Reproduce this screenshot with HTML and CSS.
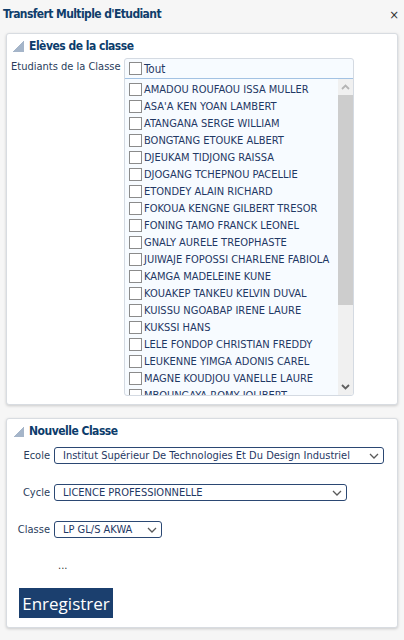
FILE: index.html
```html
<!DOCTYPE html>
<html lang="fr">
<head>
<meta charset="utf-8">
<title>Transfert Multiple d'Etudiant</title>
<link rel="stylesheet" href="styles.css">
</head>
<body>
<div class="titlebar">
  <span class="title">Transfert Multiple d'Etudiant</span>
  <span class="close">×</span>
</div>

<section class="panel panel-students">
  <div class="panel-head"><span class="tri"></span><span>Elèves de la classe</span></div>
  <div class="students-row">
    <div class="field-label">Etudiants de la Classe</div>
    <div class="listbox">
      <div class="list-head"><span class="cb"></span><span>Tout</span></div>
      <div class="list-body">
        <div class="list-items">
          <div class="item"><span class="cb"></span><span>AMADOU ROUFAOU ISSA MULLER</span></div>
          <div class="item"><span class="cb"></span><span>ASA'A KEN YOAN LAMBERT</span></div>
          <div class="item"><span class="cb"></span><span>ATANGANA SERGE WILLIAM</span></div>
          <div class="item"><span class="cb"></span><span>BONGTANG ETOUKE ALBERT</span></div>
          <div class="item"><span class="cb"></span><span>DJEUKAM TIDJONG RAISSA</span></div>
          <div class="item"><span class="cb"></span><span>DJOGANG TCHEPNOU PACELLIE</span></div>
          <div class="item"><span class="cb"></span><span>ETONDEY ALAIN RICHARD</span></div>
          <div class="item"><span class="cb"></span><span>FOKOUA KENGNE GILBERT TRESOR</span></div>
          <div class="item"><span class="cb"></span><span>FONING TAMO FRANCK LEONEL</span></div>
          <div class="item"><span class="cb"></span><span>GNALY AURELE TREOPHASTE</span></div>
          <div class="item"><span class="cb"></span><span>JUIWAJE FOPOSSI CHARLENE FABIOLA</span></div>
          <div class="item"><span class="cb"></span><span>KAMGA MADELEINE KUNE</span></div>
          <div class="item"><span class="cb"></span><span>KOUAKEP TANKEU KELVIN DUVAL</span></div>
          <div class="item"><span class="cb"></span><span>KUISSU NGOABAP IRENE LAURE</span></div>
          <div class="item"><span class="cb"></span><span>KUKSSI HANS</span></div>
          <div class="item"><span class="cb"></span><span>LELE FONDOP CHRISTIAN FREDDY</span></div>
          <div class="item"><span class="cb"></span><span>LEUKENNE YIMGA ADONIS CAREL</span></div>
          <div class="item"><span class="cb"></span><span>MAGNE KOUDJOU VANELLE LAURE</span></div>
          <div class="item"><span class="cb"></span><span>MBOUNGAYA ROMY JOLIBERT</span></div>
        </div>
        <div class="scrollbar">
          <div class="sb-btn"><svg width="9" height="6" viewBox="0 0 9 6"><path d="M1 5 L4.5 1.5 L8 5" fill="none" stroke="#b4b4b4" stroke-width="1.8"/></svg></div>
          <div class="sb-track"><div class="sb-thumb"></div></div>
          <div class="sb-btn"><svg width="9" height="6" viewBox="0 0 9 6"><path d="M1 1 L4.5 4.5 L8 1" fill="none" stroke="#606060" stroke-width="1.8"/></svg></div>
        </div>
      </div>
    </div>
  </div>
</section>

<section class="panel panel-class">
  <div class="panel-head"><span class="tri"></span><span>Nouvelle Classe</span></div>
  <div class="form-grid">
    <label class="form-label">Ecole</label>
    <div class="select select-ecole"><span>Institut Supérieur De Technologies Et Du Design Industriel</span><svg width="10" height="6" viewBox="0 0 10 6"><path d="M1 1 L5 5 L9 1" fill="none" stroke="#5a5a5a" stroke-width="1.3"/></svg></div>
    <label class="form-label">Cycle</label>
    <div class="select select-cycle"><span>LICENCE PROFESSIONNELLE</span><svg width="10" height="6" viewBox="0 0 10 6"><path d="M1 1 L5 5 L9 1" fill="none" stroke="#5a5a5a" stroke-width="1.3"/></svg></div>
    <label class="form-label">Classe</label>
    <div class="select select-classe"><span>LP GL/S AKWA</span><svg width="10" height="6" viewBox="0 0 10 6"><path d="M1 1 L5 5 L9 1" fill="none" stroke="#5a5a5a" stroke-width="1.3"/></svg></div>
    <div></div>
    <div class="dots">...</div>
  </div>
  <button class="btn-save">Enregistrer</button>
</section>
</body>
</html>
```
FILE: styles.css
```css
* { box-sizing: border-box; }
html, body { margin: 0; padding: 0; }
body {
  background: #f6f6f6;
  font-family: "DejaVu Sans Condensed", "DejaVu Sans", sans-serif;
  font-stretch: condensed;
  font-size: 11px;
  color: #1f3864;
  width: 404px;
  height: 640px;
  overflow: hidden;
}
.titlebar {
  display: flex;
  justify-content: space-between;
  align-items: center;
  height: 28px;
  padding: 0 5px 0 3px;
}
.title {
  font-weight: bold;
  font-size: 12px;
  letter-spacing: -0.6px;
  color: #0f3d6b;
}
.close {
  font-family: "DejaVu Sans", sans-serif;
  font-size: 13px;
  color: #333;
}
.panel {
  margin: 5px 6px 0 6px;
  background: #fff;
  border: 1px solid #d8dce1;
  border-radius: 3px;
  box-shadow: 0 1px 3px rgba(0,0,0,0.18);
}
.panel-students { height: 372px; }
.panel-class { margin-top: 13px; height: 210px; padding-bottom: 8px; }
.panel-head {
  display: flex;
  align-items: center;
  gap: 5px;
  height: 16px;
  margin: 4px 0 0 6px;
  font-weight: bold;
  font-size: 12px;
  letter-spacing: -0.5px;
  color: #0c3c6b;
}
.tri {
  width: 11px;
  height: 11px;
  background: linear-gradient(135deg, transparent 50%, #a5b5c9 50%);
}
.students-row {
  display: grid;
  grid-template-columns: 113px 230px;
  margin: 4px 0 0 4px;
}
.field-label {
  color: #2a3d5c;
  padding-top: 2px;
}
.listbox {
  height: 338px;
  border: 1px solid #d4dae2;
  border-radius: 3px;
  background: #f7fbff;
  display: flex;
  flex-direction: column;
  overflow: hidden;
}
.list-head {
  display: flex;
  align-items: center;
  gap: 2px;
  height: 20px;
  padding-left: 4px;
  border-bottom: 1px solid #a3c2e3;
  font-size: 11.5px;
  flex: none;
}
.list-body {
  flex: 1;
  display: flex;
  min-height: 0;
}
.list-items {
  flex: 1;
  overflow: hidden;
  padding: 2px 0 0 4px;
}
.item {
  display: flex;
  align-items: center;
  gap: 2px;
  height: 17px;
  white-space: nowrap;
}
.cb {
  width: 13px;
  height: 13px;
  flex: none;
  border: 1px solid #8b8b8b;
  background: #fff;
}
.scrollbar {
  width: 15px;
  flex: none;
  background: #f0f0f0;
  display: flex;
  flex-direction: column;
}
.sb-btn {
  height: 16px;
  display: flex;
  align-items: center;
  justify-content: center;
  flex: none;
}
.sb-track {
  flex: 1;
  display: flex;
  flex-direction: column;
}
.sb-thumb {
  height: 210px;
  background: #cdcdcd;
}
.form-grid {
  display: grid;
  grid-template-columns: 43px auto;
  column-gap: 4px;
  row-gap: 20px;
  align-items: center;
  margin-top: 8px;
}
.form-label {
  justify-self: end;
  color: #2a3d5c;
}
.select {
  justify-self: start;
  height: 17px;
  border: 1px solid #2b4873;
  border-radius: 3px;
  background: #fff;
  display: flex;
  align-items: center;
  justify-content: space-between;
  padding: 0 4px 0 8px;
  color: #1f3864;
  white-space: nowrap;
}
.select-ecole { width: 330px; }
.select-cycle { width: 293px; }
.select-classe { width: 108px; }
.dots {
  margin: 1px 0 0 4px;
  color: #333;
}
.btn-save {
  display: block;
  margin: 16px 0 0 12px;
  width: 94px;
  height: 30px;
  background: #1b3f6e;
  color: #fff;
  border: none;
  border-radius: 0;
  font-family: "Open Sans", sans-serif;
  font-size: 17px;
  padding: 0;
}
```
